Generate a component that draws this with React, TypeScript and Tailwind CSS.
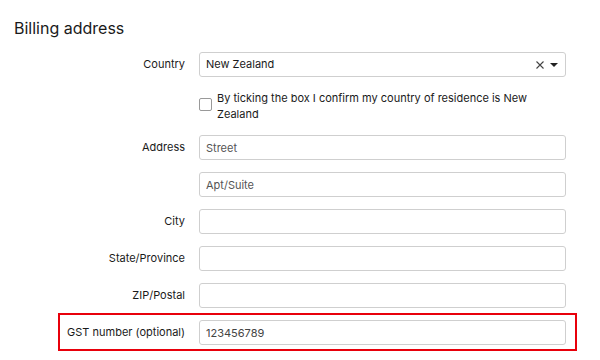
import React from 'react';

const font = { fontFamily: 'Inter, "Noto Sans", sans-serif' };

const Field = ({ label, placeholder, value }: { label: string; placeholder?: string; value?: string }) => (
  <div className="flex items-center">
    <label className="w-[171px] shrink-0 text-right text-[11px] text-[#1a1a1a]">{label}</label>
    <input
      className="ml-[14px] h-[25px] w-[367px] rounded-[3px] border border-[#cfcfcf] bg-white px-[6px] text-[11px] text-[#333] outline-none placeholder:text-[#555]"
      placeholder={placeholder}
      defaultValue={value}
    />
  </div>
);

export default function App() {
  return (
    <div style={font} className="min-h-[360px] w-[600px] bg-white pl-[14px] pt-[17px] text-[#1a1a1a]">
      <h2 className="text-[16px] leading-[22px] font-normal">Billing address</h2>

      <div className="mt-[13px]">
        {/* Country select */}
        <div className="flex items-center">
          <label className="w-[171px] shrink-0 text-right text-[11px]">Country</label>
          <div className="ml-[14px] flex h-[25px] w-[367px] items-center rounded-[3px] border border-[#cfcfcf] px-[6px] text-[11px]">
            <span className="flex-1">New Zealand</span>
            <svg width="10" height="10" viewBox="0 0 10 10" className="mr-[5px]">
              <path d="M1.5 1.5 L8.5 8.5 M8.5 1.5 L1.5 8.5" stroke="#444" strokeWidth="1.1" />
            </svg>
            <svg width="8" height="6" viewBox="0 0 8 6" className="mr-[1px]">
              <path d="M0 1 L8 1 L4 5 Z" fill="#222" />
            </svg>
          </div>
        </div>

        {/* Confirmation checkbox */}
        <div className="ml-[185px] mt-[13px] flex w-[367px]">
          <span className="mt-[8px] h-[13px] w-[13px] shrink-0 rounded-[2px] border border-[#999] bg-white" />
          <p className="ml-[5px] text-[11px] leading-[16px]">
            By ticking the box I confirm my country of residence is New Zealand
          </p>
        </div>

        <div className="mt-[13px] flex flex-col gap-[12px]">
          <Field label="Address" placeholder="Street" />
          <Field label="" placeholder="Apt/Suite" />
          <Field label="City" />
          <Field label="State/Province" />
          <Field label="ZIP/Postal" />
        </div>

        {/* Highlighted GST row */}
        <div className="ml-[44px] mt-[5px] flex w-[519px] items-center border-2 border-[#e8000b] pb-[4px] pt-[5px]">
          <label className="w-[125px] shrink-0 whitespace-nowrap text-right text-[11px]">GST number (optional)</label>
          <input
            className="ml-[14px] h-[25px] w-[367px] rounded-[3px] border border-[#cfcfcf] bg-white px-[6px] text-[11px] text-[#444] outline-none"
            defaultValue="123456789"
          />
        </div>
      </div>
    </div>
  );
}
